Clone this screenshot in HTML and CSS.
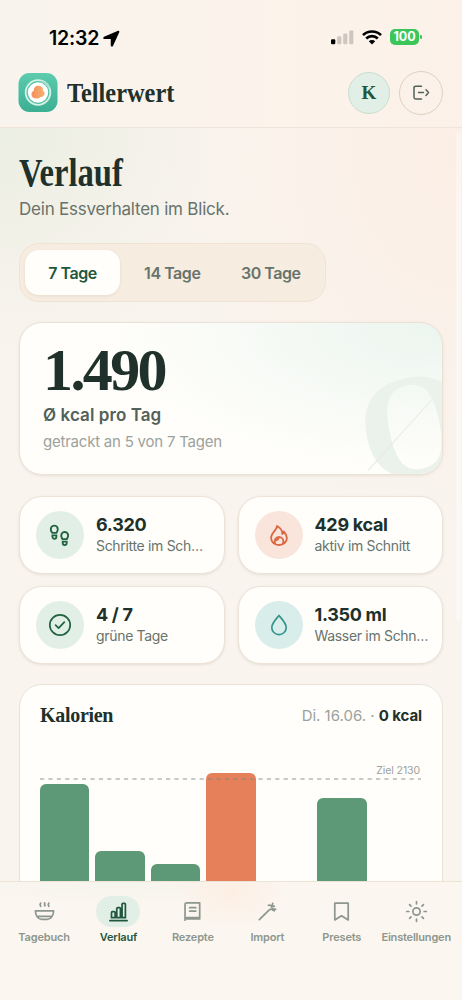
FILE: index.html
```html
<!DOCTYPE html>
<html lang="de">
<head>
<meta charset="utf-8">
<title>Tellerwert</title>
<link rel="stylesheet" href="styles.css">
</head>
<body>
<div class="app">
  <header class="top">
    <div class="status">
      <div class="clock"><span>12:32</span>
        <svg width="17" height="17" viewBox="0 0 16 16"><path d="M14.200.8 1 6.300c-1.200.6-.9 2.200.4 2.200h5.900v5.900c0 1.400 1.700 1.600 2.200.4L15.300 2C15.600 1 15 .5 14.200.8z" fill="#000"/></svg>
      </div>
      <div class="signals">
        <svg width="23" height="15" viewBox="0 0 23 15"><rect x="0" y="9.300" width="4.300" height="5" rx="1.200" fill="#000"/><g fill="#cfc7bf"><rect x="6.200" y="6.300" width="4.200" height="8" rx="1.200"/><rect x="12.200" y="3.500" width="4.200" height="10.800" rx="1.200"/><rect x="18.200" y=".5" width="4.200" height="13.800" rx="1.200"/></g></svg>
        <svg width="20" height="15" viewBox="0 0 20 15"><path d="M1 5.100a13 13 0 0 1 18 0M4.200 8.500a8.400 8.400 0 0 1 11.600 0" fill="none" stroke="#000" stroke-width="2.700"/><path d="M6.800 11.200a4.600 4.600 0 0 1 6.400 0L10 14.500z" fill="#000"/></svg>
        <div class="battery">100</div>
      </div>
    </div>
    <div class="bar">
      <svg class="logo" width="40" height="40" viewBox="0 0 40 40"><defs><linearGradient id="lg" x1="0" y1="0" x2="0" y2="1"><stop offset="0" stop-color="#5ccbae"/><stop offset="1" stop-color="#3caf93"/></linearGradient><linearGradient id="fd" x1="0" y1="0" x2="1" y2="0"><stop offset="0" stop-color="#f1905f"/><stop offset="1" stop-color="#f9b06f"/></linearGradient></defs><rect x=".5" width="39" height="39" rx="11" fill="url(#lg)"/><circle cx="20" cy="19.500" r="13.200" fill="#d8f2e9"/><circle cx="20" cy="19.500" r="10.800" fill="#fff" stroke="#55c0a4" stroke-width="1.200"/><path d="M23 8.300a11.500 11.500 0 0 1 8 7.500" stroke="#9fdcca" stroke-width="1.600" fill="none"/><path d="M13.500 21.500c0-2.300 1-3.200 2.300-3.500-.2-3.200 1.700-5.200 4.500-5.200 3 0 4.900 2 4.700 4.800 1.600 1.100 2 2.500 1.400 4-.7 1.900-2.200 2.600-4 2.300-.9 1.300-2.300 1.800-4 1.600-2.900 0-4.900-1.500-4.900-4z" fill="url(#fd)"/></svg>
      <span class="brand">Tellerwert</span>
      <div class="avatar">K</div>
      <button class="logout" aria-label="Abmelden"><svg width="18" height="16" viewBox="0 0 18 16" fill="none" stroke="#526159" stroke-width="1.500" stroke-linecap="round" stroke-linejoin="round"><path d="M9.500 1.200H3.700Q2 1.200 2 2.900v9.400q0 1.700 1.700 1.700h5.800M6.500 7.600h5M14 4.800l2.500 2.800-2.500 2.800"/></svg></button>
    </div>
  </header>

  <main class="page">
    <h1 class="title"><span>Verlauf</span></h1>
    <p class="subtitle">Dein Essverhalten im Blick.</p>
    <div class="tabs"><button class="tab active">7 Tage</button><button class="tab">14 Tage</button><button class="tab">30 Tage</button></div>

    <section class="hero">
      <div class="hero-mark" aria-hidden="true"><span>O</span></div>
      <div class="hero-num">1.490</div>
      <div class="hero-label">Ø kcal pro Tag</div>
      <div class="hero-sub">getrackt an 5 von 7 Tagen</div>
    </section>

    <section class="stats">
      <div class="stat"><div class="dot green"><svg width="24" height="24" viewBox="0 0 24 24" fill="none" stroke="#21623f" stroke-width="1.800"><path d="M4.200 9.800C2.700 7.800 2.500 5.600 3.400 4.100c1.300-2 4.500-2 5.800-.1.900 1.600.7 3.700-.7 5.800zM4.400 12.300h4v1.500a2 2 0 0 1-4 0zM14.500 16.200c-1.400-2.100-1.600-4.200-.7-5.800 1.300-1.900 4.500-1.900 5.800.1.900 1.500.7 3.500-.8 5.700zM14.700 18.600h4v1.500a2 2 0 0 1-4 0z"/></svg></div><div class="info"><b>6.320</b><span>Schritte im Sch…</span></div></div>
      <div class="stat"><div class="dot coral"><svg width="24" height="24" viewBox="0 0 24 24" fill="none" stroke="#db6743" stroke-width="1.800" stroke-linejoin="round" stroke-linecap="round"><path d="M10 3c.3 3.800-5.900 6.800-5.900 12 0 4.200 3.400 7 7.900 7s7.900-2.800 7.900-6.900c0-3-1.300-4.700-3.200-6.600-.1 1.300-.6 2.100-1.400 2.600C15.400 7.500 13.500 4.800 10 3zM8.500 21c-2.200-3.500.2-7.200 3.500-7.200 3.400 0 5.600 3.700 3.700 7M8.700 17.300q2.300 0 3.300-3.100"/></svg></div><div class="info"><b>429 kcal</b><span>aktiv im Schnitt</span></div></div>
      <div class="stat"><div class="dot green"><svg width="24" height="24" viewBox="0 0 24 24" fill="none" stroke="#21623f" stroke-width="1.700" stroke-linecap="round" stroke-linejoin="round"><circle cx="12" cy="12" r="10.200"/><path d="m7.600 12.200 3 2.900 5.700-5.900"/></svg></div><div class="info"><b>4 / 7</b><span>grüne Tage</span></div></div>
      <div class="stat"><div class="dot aqua"><svg width="24" height="24" viewBox="0 0 24 24" fill="none" stroke="#37948c" stroke-width="1.700" stroke-linejoin="round"><path d="M12 2.500C9.300 5.800 4.800 10.300 4.800 14.400a7.200 7.200 0 0 0 14.400 0c0-4.100-4.500-8.600-7.200-11.900z"/></svg></div><div class="info"><b>1.350 ml</b><span>Wasser im Schn…</span></div></div>
    </section>

    <section class="chart-card">
      <div class="chart-head"><h2>Kalorien</h2><p>Di. 16.06. · <b>0 kcal</b></p></div>
      <div class="chart">
        <div class="bars">
          <i style="height:216px"></i><i style="height:149px"></i><i style="height:136.500px"></i><i class="over" style="height:227px"></i><i style="height:0"></i><i style="height:202px"></i><i style="height:0"></i>
        </div>
        <div class="goal"><span>Ziel 2130</span><svg width="381" height="2"><path d="M0 1H381" stroke="#7e8780" stroke-opacity=".85" stroke-width="1.200" stroke-dasharray="4.200 4.200"/></svg></div>
      </div>
    </section>
  </main>

  <div class="scrollbar"></div>

  <nav class="nav">
    <a><i><svg width="24" height="24" viewBox="0 0 24 24"><path d="M2.500 11.300h19c0 4.800-2.800 8.900-6.500 8.900H9c-3.700 0-6.500-4.100-6.500-8.900zM5.500 17h13M8 6.500c-.9-1.300-.9-2.200 0-3.200M12.500 6c-1.300-.8.600-2-.5-3M16.500 6.500c-.9-1.300-.9-2.200 0-3.200"/></svg></i><span>Tagebuch</span></a>
    <a class="on"><i><svg width="24" height="24" viewBox="0 0 24 24"><path d="M3 21.500h18M4.700 18.500v-5.300q0-1 1-1h1.800q1 0 1 1v5.300zM10.200 18.500V9q0-1 1-1H13q1 0 1 1v9.500zM15.700 18.500V4.500q0-1 1-1h1.500q1 0 1 1v14z"/></svg></i><span>Verlauf</span></a>
    <a><i><svg width="24" height="24" viewBox="0 0 24 24"><path d="M4.200 21V4.800Q4.200 3 6 3h13.500v15.500H6.500Q4.200 18.500 4.200 21zM9 8h6.500M9 11.500h6.500M4.500 19.800h15v-1.500"/></svg></i><span>Rezepte</span></a>
    <a><i><svg width="24" height="24" viewBox="0 0 24 24"><path d="M3.500 20.500 13 11q2.500-2.500 7.500-1.200M13 5.500q2.500-.5 3.500 1.800M17.500 3.500l-1.200 3.700 2.800-.8M16.500 9.800l2.500 1.500"/></svg></i><span>Import</span></a>
    <a><i><svg width="24" height="24" viewBox="0 0 24 24"><path d="M5 3.300h14v17.500L12 16.500l-7 4.300z"/></svg></i><span>Presets</span></a>
    <a><i><svg width="24" height="24" viewBox="0 0 24 24"><circle cx="12" cy="12" r="3.800"/><path d="M12 1.800V4M12 20v2.200M1.800 12H4M20 12h2.200M4.800 4.800l1.500 1.500M17.700 17.700l1.500 1.500M19.200 4.800l-1.500 1.500M6.300 17.700l-1.500 1.500"/></svg></i><span>Einstellungen</span></a>
  </nav>
</div>
</body>
</html>
```
FILE: styles.css
```css
* { box-sizing: border-box; }
body { margin: 0; font-family: Inter, "Liberation Sans", sans-serif; color: #20302a; }
h1, h2, p { margin: 0; }
button { font: inherit; border: 0; background: none; padding: 0; }
.app {
  position: relative; height: 1000px; overflow: hidden; display: flex; flex-direction: column;
  background: radial-gradient(ellipse 240px 220px at 0 130px, #ebeee2, transparent),
    radial-gradient(ellipse 300px 380px at 100% 150px, #fbeee5, transparent), #f9f4ee;
}
.top { flex: none; height: 128px; border-bottom: 1px solid #efe5da; background: linear-gradient(90deg, #f8f4ed, #fcf3eb 60%, #fbf1e9); }
.status { height: 62px; display: flex; justify-content: space-between; padding: 27px 43px 0 49px; }
.clock { display: flex; gap: 4px; height: 22px; align-items: center; font-size: 19.500px; font-weight: 600; color: #000; }
.clock span { letter-spacing: -.2px; }
.signals { display: flex; gap: 8px; height: 20px; align-items: center; }
.battery { position: relative; width: 29px; height: 16px; border-radius: 5px; background: #3bc659; color: #fff; font-size: 12.500px; font-weight: 700; line-height: 16px; text-align: center; }
.battery::after { content: ""; position: absolute; right: -3px; top: 6px; width: 2px; height: 4px; border-radius: 1px; background: #3bc659; }
.bar { display: flex; align-items: center; height: 62px; padding: 0 19px 0 18px; }
.brand { font: bold 28px/40px "Liberation Serif", serif; transform: scaleX(.87); transform-origin: 0 50%; margin-left: 9px; flex: 1; }
.avatar { width: 42px; height: 42px; border-radius: 50%; border: 1px solid #c8ded0; background: #e2efe6; color: #21573c; font: bold 19px/40px "Liberation Serif", serif; text-align: center; margin-right: 9px; }
.logout { width: 44px; height: 44px; border-radius: 50%; border: 1px solid #ddd1c0; display: grid; place-items: center; }

.page { padding: 0 19px; flex: 1; }
.title { height: 70px; padding-top: 22px; font: bold 40px/46px "Liberation Serif", serif; }
.title span { display: inline-block; transform: scaleX(.815); transform-origin: 0 50%; }
.subtitle { font-size: 17px; line-height: 22px; letter-spacing: -.22px; color: #68736b; }
.tabs { display: flex; width: 307px; height: 59px; margin-top: 23px; padding: 6px 5px; border: 1px solid #f0e3d4; border-radius: 20px; background: #f6ecdf; }
.tab { flex: 1; border-radius: 14px; font-size: 16px; font-weight: 600; letter-spacing: -.45px; color: #68736b; padding-left: 3px; }
.tab:last-child { padding: 0; }
.tab.active { flex: 0 0 95px; padding: 0; background: #fffefb; color: #21573c; box-shadow: 0 1px 3px #6e50281a; }

.hero { position: relative; overflow: hidden; height: 153px; margin-top: 20px; padding: 17px 23px; border: 1px solid #eae2d6; border-radius: 23px; background: radial-gradient(ellipse 340px 150px at 100% 0, #ecf5ef, transparent), #fffefb; box-shadow: 0 1px 3px #5a46281a; }
.hero-num { font: bold 60px/60px "Liberation Serif", serif; letter-spacing: -2.600px; }
.hero-label { margin-top: 3px; font-size: 17px; line-height: 24px; font-weight: 600; letter-spacing: .08px; color: #526159; }
.hero-sub { margin-top: 4px; font-size: 15px; line-height: 22px; letter-spacing: -.22px; color: #9ca29b; }
.hero-mark { position: absolute; right: -20px; bottom: -10px; width: 100px; height: 115px; color: #ebf2ec; }
.hero-mark span { display: block; font: bold 148px/115px "Liberation Serif", serif; transform: translate(-5px, 1px) scaleX(.96) rotate(-12deg); transform-origin: 50% 50%; }
.hero-mark::after { content: ""; position: absolute; left: -10px; top: 65px; width: 97px; height: 1.200px; background: #e6ebe5; transform: rotate(-48deg); }

.stats { display: grid; grid-template-columns: repeat(2, minmax(0, 1fr)); gap: 12px 13px; margin-top: 21px; }
.stat { display: flex; align-items: center; height: 78px; gap: 12px; padding: 0 16px; border: 1px solid #ece4d9; border-radius: 23px; background: #fffefb; box-shadow: 0 1px 3px #5a46281f; }
.dot { flex: none; width: 48px; height: 48px; border-radius: 50%; display: grid; place-items: center; }
.green { background: #e2efe6; }
.coral { background: #fae5dc; }
.aqua { background: #d9edea; }
.info { min-width: 0; flex: 1; }
.info b { display: block; font-size: 18px; line-height: 22px; font-weight: 700; letter-spacing: -.3px; }
.info span { display: block; font-size: 14px; line-height: 20px; letter-spacing: -.32px; color: #68736b; white-space: nowrap; }

.chart-card { height: 360px; margin-top: 20px; padding: 18px 20px; border: 1px solid #eae2d6; border-radius: 23px; background: #fffefb; }
.chart-head { display: flex; justify-content: space-between; align-items: center; height: 24px; }
.chart-head h2 { font: bold 20px/24px "Liberation Serif", serif; letter-spacing: -.3px; }
.chart-head p { font-size: 15px; color: #9ca29b; letter-spacing: 0; }
.chart-head b { color: #20302a; font-weight: 700; letter-spacing: -.1px; }
.chart { position: relative; height: 260px; margin-top: 13px; padding-top: 20px; }
.bars { display: flex; align-items: flex-end; gap: 6.200px; height: 240px; }
.bars i { flex: 1; border-radius: 6px 6px 0 0; background: #5d9977; }
.bars .over { background: #e5805b; }
.goal { position: absolute; left: 0; top: 24px; width: 381px; }
.goal span { display: block; text-align: right; font-size: 10.500px; line-height: 13px; color: #9ca29b; padding: 0 1px 1px 0; letter-spacing: -.1px; }
.goal svg { display: block; }

.scrollbar { position: absolute; right: 1px; top: 132px; width: 5px; height: 488px; border-radius: 3px; background: #ffffff66; }

.nav { position: absolute; left: 0; bottom: 0; width: 462px; height: 119px; padding: 14px 8.600px 0 6.800px; display: flex; border-top: 1px solid #ede3d4; background: radial-gradient(ellipse 55px 40px at 231px 8px, #fdeee3, transparent), radial-gradient(ellipse 180px 22px at 120px 0, #f5f4ec, transparent), #fbf6f0; }
.nav a { flex: 1 1 0; min-width: 0; display: flex; flex-direction: column; align-items: center; color: #8d978e; font-size: 11px; line-height: 16px; font-weight: 600; letter-spacing: -.18px; }
.nav i { display: grid; place-items: center; width: 44px; height: 31px; border-radius: 16px; margin-bottom: 2px; }
.nav svg { width: 23px; height: 23px; fill: none; stroke: currentColor; stroke-width: 1.800; stroke-linecap: round; stroke-linejoin: round; }
.nav .on { color: #21573c; }
.nav .on i { background: #e2efe6; }
.nav span { white-space: nowrap; }
```
